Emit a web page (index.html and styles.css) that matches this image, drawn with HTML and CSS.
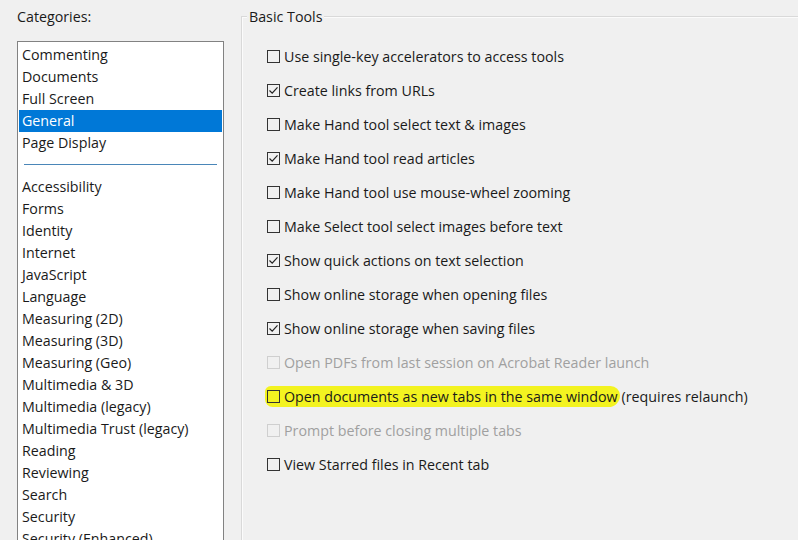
FILE: index.html
```html
<!DOCTYPE html>
<html>
<head>
<meta charset="utf-8">
<link rel="stylesheet" href="styles.css">
</head>
<body>
<div class="dialog">
  <div class="left">
    <div class="cat-label">Categories:</div>
    <div class="listbox">
      <div class="item">Commenting</div>
      <div class="item">Documents</div>
      <div class="item">Full Screen</div>
      <div class="item selected">General</div>
      <div class="item">Page Display</div>
      <div class="sep"></div>
      <div class="item">Accessibility</div>
      <div class="item">Forms</div>
      <div class="item">Identity</div>
      <div class="item">Internet</div>
      <div class="item">JavaScript</div>
      <div class="item">Language</div>
      <div class="item">Measuring (2D)</div>
      <div class="item">Measuring (3D)</div>
      <div class="item">Measuring (Geo)</div>
      <div class="item">Multimedia &amp; 3D</div>
      <div class="item">Multimedia (legacy)</div>
      <div class="item">Multimedia Trust (legacy)</div>
      <div class="item">Reading</div>
      <div class="item">Reviewing</div>
      <div class="item">Search</div>
      <div class="item">Security</div>
      <div class="item">Security (Enhanced)</div>
    </div>
  </div>
  <div class="group">
    <div class="legend">Basic Tools</div>
    <div class="options">
      <div class="opt"><span class="box"></span><span>Use single-key accelerators to access tools</span></div>
      <div class="opt"><span class="box"><svg viewBox="0 0 13 13" width="13" height="13"><polyline points="2.5,6.5 5.2,9.2 10.5,3.3" fill="none" stroke="#222" stroke-width="1.2"/></svg></span><span>Create links from URLs</span></div>
      <div class="opt"><span class="box"></span><span>Make Hand tool select text &amp; images</span></div>
      <div class="opt"><span class="box"><svg viewBox="0 0 13 13" width="13" height="13"><polyline points="2.5,6.5 5.2,9.2 10.5,3.3" fill="none" stroke="#222" stroke-width="1.2"/></svg></span><span>Make Hand tool read articles</span></div>
      <div class="opt"><span class="box"></span><span>Make Hand tool use mouse-wheel zooming</span></div>
      <div class="opt"><span class="box"></span><span>Make Select tool select images before text</span></div>
      <div class="opt"><span class="box"><svg viewBox="0 0 13 13" width="13" height="13"><polyline points="2.5,6.5 5.2,9.2 10.5,3.3" fill="none" stroke="#222" stroke-width="1.2"/></svg></span><span>Show quick actions on text selection</span></div>
      <div class="opt"><span class="box"></span><span>Show online storage when opening files</span></div>
      <div class="opt"><span class="box"><svg viewBox="0 0 13 13" width="13" height="13"><polyline points="2.5,6.5 5.2,9.2 10.5,3.3" fill="none" stroke="#222" stroke-width="1.2"/></svg></span><span>Show online storage when saving files</span></div>
      <div class="opt disabled"><span class="box"></span><span>Open PDFs from last session on Acrobat Reader launch</span></div>
      <div class="opt"><span class="hl"><span class="box"></span><span>Open documents as new tabs in the same window</span></span><span class="after">(requires relaunch)</span></div>
      <div class="opt disabled"><span class="box"></span><span>Prompt before closing multiple tabs</span></div>
      <div class="opt"><span class="box"></span><span>View Starred files in Recent tab</span></div>
    </div>
  </div>
</div>
</body>
</html>
```

FILE: styles.css
```css
html, body {
  margin: 0;
  padding: 0;
  background: #f0f0f0;
  width: 798px;
  height: 540px;
  overflow: hidden;
}
body {
  font-family: "Open Sans", "Noto Sans", sans-serif;
  font-size: 14.25px;
  color: #1a1a1a;
}
.dialog {
  display: flex;
  height: 540px;
}
.left {
  width: 224px;
  padding-left: 17px;
  padding-top: 6px;
  box-sizing: border-box;
  flex: none;
}
.cat-label {
  height: 22px;
  line-height: 22px;
  margin-bottom: 13px;
}
.listbox {
  background: #fff;
  border: 1px solid #828282;
  border-bottom: none;
  height: 520px;
  padding: 2px 1px 0 1px;
  box-sizing: border-box;
  overflow: hidden;
}
.item {
  height: 22px;
  line-height: 22px;
  padding-left: 3px;
  white-space: nowrap;
}
.item.selected {
  background: #0078d7;
  color: #fff;
}
.sep {
  height: 1px;
  background: #4a86b8;
  margin: 10px 5px 11px 5px;
}
.group {
  margin-left: 17px;
  margin-top: 16px;
  flex: 1;
  border-left: 1px solid #d9d9d9;
  border-top: 1px solid #d9d9d9;
  box-shadow: inset 1px 1px 0 #fbfbfb;
  position: relative;
}
.legend {
  position: absolute;
  left: 5px;
  top: -10px;
  background: #f0f0f0;
  padding: 0 2px;
  line-height: 20px;
}
.options {
  padding-top: 22px;
  padding-left: 25px;
}
.opt {
  height: 34px;
  display: flex;
  align-items: center;
  white-space: nowrap;
}
.box {
  width: 13px;
  height: 13px;
  border: 1px solid #333;
  box-sizing: border-box;
  background: transparent;
  margin-right: 4px;
  flex: none;
  position: relative;
}
.box svg {
  position: absolute;
  left: -1px;
  top: -1px;
}
.disabled {
  color: #a0a0a0;
}
.disabled .box {
  border-color: #cfcfcf;
}
.hl {
  display: flex;
  align-items: center;
  background: #f3f320;
  margin-left: -2px;
  padding-left: 2px;
  padding-right: 2px;
  height: 21px;
  border-radius: 6px 10px 12px 8px;
}
.after {
  margin-left: 2px;
}
```
